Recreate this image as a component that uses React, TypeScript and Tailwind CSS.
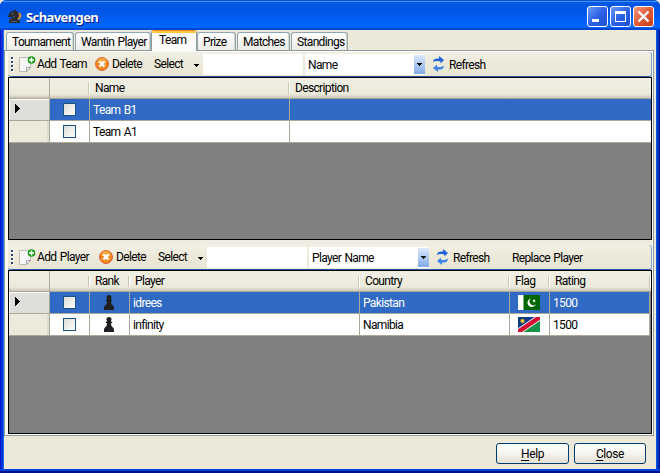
import React from "react";

type IconProps = { className?: string };

function KnightIcon() {
  return (
    <svg width="14" height="16" viewBox="0 0 14 16" className="mt-[3px] shrink-0">
      <path d="M9 5l2-1.500 2 1 .5 3-2 3-3 1z" fill="#c58a3c" />
      <path d="M2 3l2-.5L6 1.500 7 0l1 2 2 1 1 4-1.500 3L12 12v2H1v-3l3-2v-1l-3 .500L0 8l1-3z" fill="#292b2e" />
      <path d="M3 5h3M5 8l2-1M3 12.500h6" stroke="#53636f" />
    </svg>
  );
}

function AddIcon() {
  return (
    <svg width="17" height="17" viewBox="0 0 17 17" className="shrink-0">
      <path d="M.5 1.500h11v10l-4 4h-7z" fill="#f6f6f6" stroke="#bdbdbd" />
      <path d="M11.500 11.500l-4 4v-4z" fill="#fff" stroke="#8f8f8f" strokeWidth=".8" />
      <circle cx="12.500" cy="4" r="3.800" fill="#189a16" />
      <path d="M12.500 1.500v5M10 4h5" stroke="#fff" strokeWidth="1.500" />
    </svg>
  );
}

function DeleteIcon() {
  return (
    <svg width="14" height="14" viewBox="0 0 14 14" className="shrink-0">
      <circle cx="7" cy="7" r="6.400" fill="#f58a1e" stroke="#d6562a" />
      <path d="M2 6a5 5 0 0 1 10 0z" fill="#faaa45" />
      <path d="M4.500 4.500l5 5M9.500 4.500l-5 5" stroke="#fff" strokeWidth="2.400" />
    </svg>
  );
}

function RefreshIcon() {
  return (
    <svg width="13" height="16" viewBox="0 0 13 16" className="shrink-0">
      <path d="M1 6C1 3 4 2 7 2.500V0l5 4-3.500 3.500V5.500C6 4.500 3 5 1 6z" fill="#2262d4" />
      <path d="M12 9.500c0 3.500-3 4.500-6 4V16l-5-4 4-3.500v2.200c3 .6 5 .2 7-1.200z" fill="#3e83e6" />
    </svg>
  );
}

function Pawn() {
  return (
    <svg width="10" height="15" viewBox="0 0 10 15" className="mr-[2px]">
      <path d="M5 0c3 0 3 3 1.800 4L8.500 5.500 7 6.500c0 2 .7 3 2 4L10 12v3H0v-3l1-1.500c1.300-1 2-2 2-4L1.500 5.500 3.200 4C2 3 2 0 5 0z" fill="#202020" />
    </svg>
  );
}

function PakistanFlag() {
  return (
    <svg width="22" height="15" viewBox="0 0 22 15" className="mr-[2px]">
      <path d="M0 0h22v15H0z" fill="#006600" />
      <path d="M0 0h5.500v15H0z" fill="#fff" />
      <path d="M13 3.500a4.300 4.300 0 1 0 4.800 5.800A3.700 3.700 0 1 1 13 3.500z" fill="#fff" />
      <path d="M15 4.200l1 .8 1.200-.8-.3 1.400 1 .8-1.400.1-.6 1.200-.4-1.300-1.300-.2 1-.8z" fill="#fff" />
    </svg>
  );
}

function NamibiaFlag() {
  return (
    <svg width="22" height="15" viewBox="0 0 22 15" className="mr-[2px]">
      <path d="M0 0h22L0 15z" fill="#073b87" />
      <path d="M22 0v15H0z" fill="#169447" />
      <path d="M0 15v-3.800L16.500 0H22v3.800L5.500 15z" fill="#fff" />
      <path d="M0 15v-2.800L18 0h4v2.800L4 15z" fill="#d21034" />
      <circle cx="4.500" cy="4" r="2.200" fill="#c99d25" />
      <circle cx="4.500" cy="4" r="1.200" fill="#ffdb37" />
    </svg>
  );
}

function Down({ className = "" }: IconProps) {
  return (
    <svg width="5" height="3" viewBox="0 0 5 3" shapeRendering="crispEdges" className={"shrink-0 " + className}>
      <path d="M0 0h5v1H4v1H3v1H2V2H1V1H0z" fill="#000" />
    </svg>
  );
}

function Tab({ label, className, selected = false }: { label: string; className: string; selected?: boolean }) {
  if (selected) {
    return (
      <div className={"z-10 -mb-px h-[21px] overflow-hidden rounded-t-[3px] border-x border-[#919b9c] bg-[#fcfcfa] " + className}>
        <div className="h-[3px] border-t border-[#e68b2c] bg-[#ffc73c]" />
        <div className="pl-[7px] leading-[14px]">{label}</div>
      </div>
    );
  }
  return (
    <div className={"h-[18px] rounded-t-[3px] border border-b-0 border-[#91a7b4] bg-linear-to-b from-white to-[#ecebe6] pl-[5px] leading-[19px] shadow-[inset_-1px_0_#d5d5cd] " + className}>
      {label}
    </div>
  );
}

function Grip() {
  return (
    <div className="ml-[3px] flex w-[2px] shrink-0 flex-col gap-[2px]">
      {[0, 1, 2, 3].map((i) => (
        <div key={i} className="h-[2px] w-[2px] bg-[#2b4775] shadow-[1px_1px_#fff]" />
      ))}
    </div>
  );
}

function Toolbar({ player = false }: { player?: boolean }) {
  return (
    <div className="flex h-[25px] w-[644px] shrink-0 items-center rounded-[3px] border-b border-[#2a57a5] bg-linear-to-b from-[#f2f0e5] via-[#ece9d8] to-[#e9e6d7] shadow-[inset_-1px_0_#7d9ccb]">
      <Grip />
      <div className={"flex shrink-0 items-center " + (player ? "w-[86px]" : "w-[82px]")}>
        <div className="ml-[6px] flex"><AddIcon /></div>
        <span className="ml-px pt-px">{player ? "Add Player" : "Add Team"}</span>
      </div>
      <div className="flex w-[59px] shrink-0 items-center gap-[3px]">
        <DeleteIcon />
        <span className="pt-px">Delete</span>
      </div>
      <span className="w-[40px] shrink-0 pt-px">Select</span>
      <Down className="mt-0.5" />
      <div className="ml-[4px] h-[21px] w-[100px] shrink-0 bg-white" />
      <div className="ml-[2px] flex h-[21px] w-[120px] shrink-0 items-center justify-between bg-white pl-[3px]">
        <span className="pt-[2px]">{player ? "Player Name" : "Name"}</span>
        <div className="flex h-[19px] w-[11px] items-center justify-center bg-linear-to-b from-[#dce9fc] to-[#82aae8]"><Down /></div>
      </div>
      <div className="ml-[7px] flex items-center gap-[4px]">
        <RefreshIcon />
        <span className="w-[39px] pt-[2px]">Refresh</span>
      </div>
      {player && <span className="ml-[20px] pt-[2px]">Replace Player</span>}
    </div>
  );
}

function HeadCell({ className, children, sep = true }: { className: string; children?: React.ReactNode; sep?: boolean }) {
  return (
    <div className={"flex h-full shrink-0 items-center justify-between border-b border-[#aca899] bg-linear-to-b from-[#f0efe4] from-0% via-[#ebeadb] via-80% to-[#cbc7b8] to-100% " + className}>
      <span className="pl-[5px]">{children}</span>
      {sep && <div className="h-[11px] w-[2px] border-r border-white bg-[#c7c5b2]" />}
    </div>
  );
}

function RowHead({ current }: { current: boolean }) {
  return (
    <div className={"flex h-full w-[41px] shrink-0 items-center border-r border-b border-[#aca899] pl-[6px] " + (current ? "bg-[#dedfd9] shadow-[inset_1px_1px_#fff]" : "bg-[#ebeadb] shadow-[inset_-2px_0_#dedbcf]")}>
      {current && (
        <svg width="5" height="9" viewBox="0 0 5 9" className="-mt-[3px]" shapeRendering="crispEdges">
          <path d="M0 0h1v1h1v1h1v1h1v1h1v1H4v1H3v1H2v1H1v1H0z" fill="#000" />
        </svg>
      )}
    </div>
  );
}

function Cell({ className, children, center = false }: { className: string; children?: React.ReactNode; center?: boolean }) {
  return (
    <div className={"flex h-full shrink-0 items-center border-r border-b border-[#aca899] " + (center ? "justify-center " : "pt-px pl-[3px] ") + className}>
      {children}
    </div>
  );
}

function Check() {
  return <div className="h-[13px] w-[13px] border border-[#1c5180] bg-linear-to-br from-[#dcdcd7] to-white" />;
}

function Caption({ kind }: { kind: "min" | "max" | "close" }) {
  return (
    <div className={"flex h-[21px] w-[21px] items-center justify-center rounded-[3px] border border-white " + (kind === "close" ? "bg-linear-to-br from-[#ef9b80] via-[#e05a34] to-[#c63c14]" : "bg-linear-to-br from-[#6d9af5] via-[#2c62e6] to-[#1c4fd0]")}>
      <svg width="19" height="19" viewBox="0 0 19 19" className="shrink-0">
        {kind === "min" && <path d="M4 12h7v3H4z" fill="#fff" />}
        {kind === "max" && <path fillRule="evenodd" d="M4 4h11v11H4zM5 7v7h9V7z" fill="#fff" />}
        {kind === "close" && <path d="M4.500 4.500l10 10M14.500 4.500l-10 10" stroke="#fff" strokeWidth="2.400" />}
      </svg>
    </div>
  );
}

function DialogButton({ first, rest, className }: { first: string; rest: string; className: string }) {
  return (
    <button className={"flex h-[21px] items-center justify-center rounded-[3px] border border-[#003c74] bg-linear-to-b from-white via-[#f5f4ef] to-[#e2dfd3] pt-px tracking-[-0.400px] " + className}>
      <span><span className="underline underline-offset-2">{first}</span>{rest}</span>
    </button>
  );
}

export default function App() {
  return (
    <div className="h-[473px] w-[660px] overflow-hidden bg-[#ece9d8] font-['Roboto','Liberation_Sans',sans-serif] text-[12px] leading-[15px] tracking-[-0.650px] whitespace-nowrap text-black [word-spacing:1px]">
      <div className="flex h-full flex-col overflow-hidden rounded-t-[7px] bg-[#0855dd] shadow-[inset_1px_0_#0019cf,inset_-1px_0_#00138c,inset_3px_0_#0831d9,inset_-3px_0_#0030c8,inset_4px_0_#166aee]">
        <header className="flex h-[30px] shrink-0 items-center bg-linear-to-b from-[#0058e6] from-0% via-[#0054e3] via-30% to-[#0066ff] to-90% pr-[6px] pl-[8px] shadow-[inset_0_1px_#0b4ec5,inset_0_2px_#3c94ff,inset_0_-2px_#0047d5]">
          <KnightIcon />
          <span className="mt-[4px] ml-[4px] flex-1 font-['Noto_Sans','Open_Sans',sans-serif] text-[13px] font-bold tracking-[-0.600px] text-white [text-shadow:1px_1px_#0a1883]">Schavengen</span>
          <div className="flex gap-[2px] pt-[3px]">
            <Caption kind="min" />
            <Caption kind="max" />
            <Caption kind="close" />
          </div>
        </header>
        <main className="mx-[4px] flex h-[439px] shrink-0 flex-col bg-[#ece9d8]">
          <nav className="flex h-[20px] shrink-0 items-end pl-[2px]">
            <Tab label="Tournament" className="w-[68px]" />
            <Tab label="Wantin Player" className="ml-px w-[76px]" />
            <Tab label="Team" selected className="w-[46px]" />
            <Tab label="Prize" className="w-[39px] pl-[4px]" />
            <Tab label="Matches" className="ml-px w-[53px]" />
            <Tab label="Standings" className="ml-px w-[57px]" />
          </nav>
          <section className="flex h-[386px] w-[650px] shrink-0 flex-col border border-[#919b9c] bg-[#fcfcfa] pt-px pl-[3px]">
            <Toolbar />
            <div className="h-[163px] w-[644px] shrink-0 border border-black bg-[#808080]">
              <div className="flex h-[21px]">
                <HeadCell sep={false} className="w-[41px] border-r" />
                <HeadCell className="w-[40px]" />
                <HeadCell className="w-[200px]">Name</HeadCell>
                <HeadCell className="w-[361px]" sep={false}>Description</HeadCell>
              </div>
              {["Team B1", "Team A1"].map((name, i) => (
                <div key={name} className={"flex h-[22px] " + (i === 0 ? "bg-[#316ac5] text-white" : "bg-white")}>
                  <RowHead current={i === 0} />
                  <Cell center className="w-[40px]"><Check /></Cell>
                  <Cell className="w-[200px]">{name}</Cell>
                  <Cell className="w-[361px] border-r-0" />
                </div>
              ))}
            </div>
            <div className="flex h-[30px] w-[644px] shrink-0 flex-col justify-end bg-[#efede1]"><Toolbar player /></div>
            <div className="h-[164px] w-[644px] shrink-0 border border-black bg-[#808080]">
              <div className="flex h-[21px]">
                <HeadCell sep={false} className="w-[41px] border-r" />
                <HeadCell className="w-[40px]" />
                <HeadCell className="w-[40px]">Rank</HeadCell>
                <HeadCell className="w-[230px]">Player</HeadCell>
                <HeadCell className="w-[150px]">Country</HeadCell>
                <HeadCell className="w-[40px]">Flag</HeadCell>
                <HeadCell className="w-[101px]">Rating</HeadCell>
              </div>
              {[["idrees", "Pakistan"], ["infinity", "Namibia"]].map(([name, country], i) => (
                <div key={name} className={"flex h-[22px] w-[641px] " + (i === 0 ? "bg-[#316ac5] text-white" : "bg-white")}>
                  <RowHead current={i === 0} />
                  <Cell center className="w-[40px]"><Check /></Cell>
                  <Cell center className="w-[40px]"><Pawn /></Cell>
                  <Cell className="w-[230px]">{name}</Cell>
                  <Cell className="w-[150px]">{country}</Cell>
                  <Cell center className="w-[40px]">{i === 0 ? <PakistanFlag /> : <NamibiaFlag />}</Cell>
                  <Cell className="w-[100px]">1500</Cell>
                </div>
              ))}
            </div>
          </section>
          <footer className="flex h-[33px] shrink-0 items-start justify-end gap-[5px] pt-[7px] pr-[10px]">
            <DialogButton first="H" rest="elp" className="w-[73px]" />
            <DialogButton first="C" rest="lose" className="w-[72px]" />
          </footer>
        </main>
        <div className="h-[4px] shrink-0 border-b-2 border-[#00138c] bg-[#0441d8]" />
      </div>
    </div>
  );
}
